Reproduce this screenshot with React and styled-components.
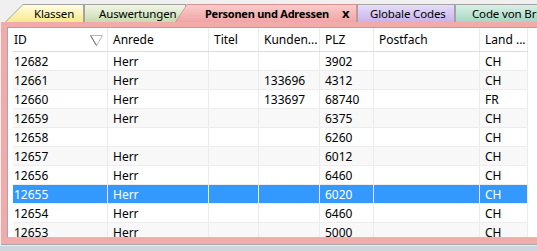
import React from 'react';
import styled, { createGlobalStyle } from 'styled-components';

const GlobalStyle = createGlobalStyle`
    html, body { margin: 0; padding: 0; background: #f0f0f0; }
    body { font-family: "Noto Sans", "Open Sans", sans-serif; }
`;

const columns = [
    { key: 'id', label: 'ID', width: 95, first: true, sort: true },
    { key: 'anrede', label: 'Anrede', width: 101 },
    { key: 'titel', label: 'Titel', width: 50 },
    { key: 'kunden', label: 'Kunden...', width: 61 },
    { key: 'plz', label: 'PLZ', width: 54 },
    { key: 'postfach', label: 'Postfach', width: 106 },
    { key: 'land', label: 'Land ...', width: 48 },
];

const rows = [
    { id: '12682', anrede: 'Herr', plz: '3902', land: 'CH' },
    { id: '12661', anrede: 'Herr', kunden: '133696', plz: '4312', land: 'CH' },
    { id: '12660', anrede: 'Herr', kunden: '133697', plz: '68740', land: 'FR' },
    { id: '12659', anrede: 'Herr', plz: '6375', land: 'CH' },
    { id: '12658', plz: '6260', land: 'CH' },
    { id: '12657', anrede: 'Herr', plz: '6012', land: 'CH' },
    { id: '12656', anrede: 'Herr', plz: '6460', land: 'CH' },
    { id: '12655', anrede: 'Herr', plz: '6020', land: 'CH', selected: true },
    { id: '12654', anrede: 'Herr', plz: '6460', land: 'CH' },
    { id: '12653', anrede: 'Herr', plz: '5000', land: 'CH' },
];

const tabs = [
    { label: 'Klassen', width: 79, slant: 18, pad: 29, from: '#fffde0', to: '#f8e98a', z: 2 },
    { label: 'Auswertungen', width: 102, slant: 0, pad: 15, from: '#f0f5e4', to: '#c6dbae', z: 1 },
    { label: 'Personen und Adressen', width: 182, slant: 12, pad: 30, from: '#f9cccc', to: '#f1a4a4', z: 5, active: true, overlap: -11 },
    { label: 'Globale Codes', width: 98, slant: 0, pad: 13, from: '#e6dcfa', to: '#c7b3ec', z: 4 },
    { label: 'Code von Bri', width: 100, slant: 0, pad: 17, from: '#d8f0e6', to: '#a6d6c2', z: 3 },
];

const Screen = styled.div`
    width: 537px;
    height: 251px;
    display: flex;
    flex-direction: column;
    overflow: hidden;
    background: #f0f0f0;
`;

const TabStrip = styled.div`
    height: 22px;
    flex: none;
    display: flex;
    align-items: flex-end;
    padding-left: 5px;
    overflow: hidden;
    white-space: nowrap;
`;

const Tab = styled.div`
    position: relative;
    flex: none;
    height: 18px;
    width: ${p => p.$width}px;
    margin-left: ${p => p.$overlap || 0}px;
    padding-left: ${p => p.$pad}px;
    box-sizing: border-box;
    z-index: ${p => p.$z};
    display: flex;
    align-items: center;
    font-size: ${p => p.$active ? 11 : 11.5}px;
    font-weight: ${p => p.$active ? 700 : 400};
    letter-spacing: ${p => p.$active ? '-0.25px' : '-0.15px'};
    color: #000;
    background: ${p => p.$active ? '#d89090' : '#a3a3a3'};
    clip-path: polygon(${p => p.$slant}px 0, 100% 0, 100% 100%, 0 100%);

    &::before {
        content: '';
        position: absolute;
        top: 1px;
        left: 1px;
        right: 1px;
        bottom: 0;
        background: linear-gradient(${p => p.$from}, ${p => p.$to});
        clip-path: polygon(${p => Math.max(p.$slant - 1, 0)}px 0, 100% 0, 100% 100%, 0 100%);
    }

    span { position: relative; }
`;

const CloseMark = styled.span`
    margin-left: 13px;
    margin-top: 1px;
    font-size: 13px;
    font-weight: 700;
    letter-spacing: 0;
    line-height: 1;
`;

const Frame = styled.div`
    flex: 1;
    min-height: 0;
    display: flex;
    margin-left: 1px;
    padding: 5px 0 6px 6px;
    background: #f2abab;
    border-bottom: 1px solid #a8a8a8;
`;

const Panel = styled.div`
    flex: 1;
    min-width: 0;
    overflow: hidden;
    background: #fff;
    border-top: 1px solid #a6a6a6;
    border-left: 1px solid #a6a6a6;
    border-bottom: 1px solid #c4c4c4;
    padding-left: 5px;
    font-size: 12px;
    color: #000;
`;

const Row = styled.div`
    display: flex;
    height: ${p => p.$header ? 24 : 19}px;
    border-bottom: 1px solid ${p => p.$header ? '#dcdcdc' : '#ededed'};
    box-sizing: border-box;
    background: ${p => p.$selected ? '#3399ff' : p.$alt ? '#f8f8f8' : '#fff'};
    color: ${p => p.$selected ? '#fff' : '#000'};
    width: 515px;
`;

const Cell = styled.div`
    flex: none;
    width: ${p => p.$width}px;
    box-sizing: border-box;
    display: flex;
    align-items: center;
    justify-content: space-between;
    padding-left: ${p => p.$first ? 1 : 5}px;
    padding-right: 4px;
    border-right: 1px solid #ebebeb;
    white-space: nowrap;
    overflow: hidden;
`;

const SortGlyph = styled.svg`
    width: 13px;
    height: 11px;
    margin-top: 1px;
`;

const Footer = styled.div`
    height: 5px;
    flex: none;
    background: #cdd5e1;
    border-top: 1px solid #e8ecf2;
`;

const App = () => (
    <>
        <GlobalStyle />
        <Screen>
            <TabStrip>
                {tabs.map(t => (
                    <Tab key={t.label} $width={t.width} $slant={t.slant} $pad={t.pad}
                        $from={t.from} $to={t.to} $z={t.z} $active={t.active} $overlap={t.overlap}>
                        <span>{t.label}</span>
                        {t.active && <CloseMark>x</CloseMark>}
                    </Tab>
                ))}
            </TabStrip>
            <Frame>
                <Panel>
                    <Row $header>
                        {columns.map(c => (
                            <Cell key={c.key} $width={c.width} $first={c.first}>
                                {c.label}
                                {c.sort && (
                                    <SortGlyph viewBox="0 0 13 11">
                                        <path d="M0.5 0.5 H12.5 L6.5 10.5 Z" fill="none" stroke="#b4b4b4" />
                                        <path d="M0.5 0.5 L6.5 10.5" fill="none" stroke="#6e6e6e" />
                                    </SortGlyph>
                                )}
                            </Cell>
                        ))}
                    </Row>
                    {rows.map((r, i) => (
                        <Row key={r.id} $alt={i % 2 === 1} $selected={r.selected}>
                            {columns.map(c => (
                                <Cell key={c.key} $width={c.width} $first={c.first}>{r[c.key] || ''}</Cell>
                            ))}
                        </Row>
                    ))}
                </Panel>
            </Frame>
            <Footer />
        </Screen>
    </>
);

export default App;
